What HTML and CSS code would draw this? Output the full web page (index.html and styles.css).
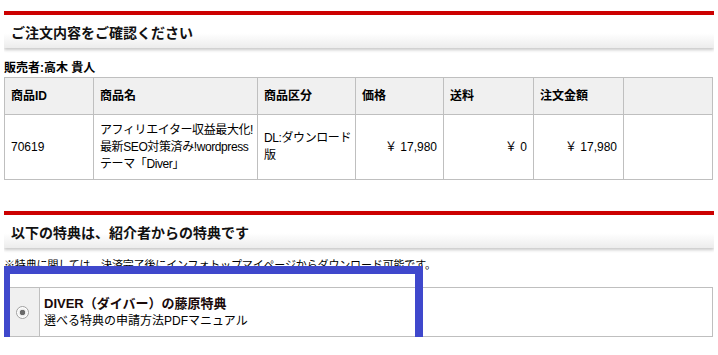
FILE: index.html
```html
<!DOCTYPE html>
<html lang="ja">
<head>
  <meta charset="UTF-8">
  <meta name="viewport" content="width=device-width, initial-scale=1.0">
  <title>ご注文内容をご確認ください</title>
  <link rel="stylesheet" href="styles.css">
</head>
<body>
  <h2 class="midashi">ご注文内容をご確認ください</h2>

  <p class="hanbaisha">販売者:高木 貴人</p>
  <table class="chumon">
    <colgroup>
      <col style="width: 89px">
      <col style="width: 164px">
      <col style="width: 98px">
      <col style="width: 88px">
      <col style="width: 90px">
      <col style="width: 90px">
      <col>
    </colgroup>
    <thead>
      <tr>
        <th>商品ID</th>
        <th>商品名</th>
        <th>商品区分</th>
        <th>価格</th>
        <th>送料</th>
        <th>注文金額</th>
        <th></th>
      </tr>
    </thead>
    <tbody>
      <tr>
        <td>70619</td>
        <td class="nowrap">アフィリエイター収益最大化!<br>最新SEO対策済み!wordpress<br>テーマ「Diver」</td>
        <td class="nowrap">DL:ダウンロード<br>版</td>
        <td class="kingaku">￥ 17,980</td>
        <td class="kingaku">￥ 0</td>
        <td class="kingaku">￥ 17,980</td>
        <td></td>
      </tr>
    </tbody>
  </table>

  <h2 class="midashi midashi-tokuten">以下の特典は、紹介者からの特典です</h2>

  <div class="tokuten">
    <p class="chuui">※特典に関しては、決済完了後にインフォトップマイページからダウンロード可能です。</p>
    <table class="tokuten-list">
      <tr>
        <td class="sentaku"><span class="radio"></span></td>
        <td>
          <div class="tokuten-mei">DIVER（ダイバー）の藤原特典</div>
          <div class="tokuten-setsumei">選べる特典の申請方法PDFマニュアル</div>
        </td>
      </tr>
    </table>
    <div class="waku"></div>
  </div>
</body>
</html>
```

FILE: styles.css
```css
/* 全体 */
body {
  margin: 11px 4px 0;
  font-family: "Liberation Sans", "Noto Sans CJK JP", sans-serif;
  font-size: 12px;
  color: #000;
  background-color: #fff;
}

/* 見出し */
.midashi {
  display: flex;
  align-items: center;
  height: 33px;
  margin: 0;
  padding: 0 7px;
  border-top: 4px solid #cc0000;
  background: linear-gradient(#fff 55%, #ececec);
  box-shadow: 0 2px 3px rgba(0, 0, 0, 0.22);
  font-size: 14px;
  font-weight: bold;
  color: #111;
}
.midashi-tokuten {
  margin-top: 31px;
}

.hanbaisha {
  margin: 14px 0 3px;
  line-height: 12px;
  font-weight: bold;
}

/* 注文テーブル */
.chumon {
  width: 709px;
  border-collapse: collapse;
  table-layout: fixed;
}
.chumon th,
.chumon td {
  border: 1px solid #bfbfbf;
  padding: 0 6px;
  text-align: left;
  line-height: 17px;
}
.chumon th {
  height: 36px;
  background-color: #f0f0f0;
  font-weight: bold;
}
.chumon td {
  height: 64px;
}
.chumon .nowrap {
  white-space: nowrap;
  letter-spacing: -0.4px;
  overflow: hidden;
}
.chumon .kingaku {
  text-align: right;
}

/* 特典 */
.tokuten {
  position: relative;
}
.chuui {
  margin: 10px 0 0;
  line-height: 14px;
  font-size: 11px;
  letter-spacing: -0.15px;
  white-space: nowrap;
}
.tokuten-list {
  width: 709px;
  margin-top: 15px;
  border-collapse: collapse;
}
.tokuten-list td {
  height: 48px;
  border: 1px solid #bfbfbf;
  padding: 0 4px;
  vertical-align: middle;
}
.tokuten-list .sentaku {
  width: 26px;
  background-color: #f0f0f0;
  text-align: center;
}
.radio {
  display: inline-block;
  width: 11px;
  height: 11px;
  border: 1px solid #a0a0a0;
  border-radius: 50%;
  background: radial-gradient(#6a6a6a 0 2.5px, #e8e8e8 3px, #fff 5px);
  vertical-align: middle;
}
.tokuten-mei {
  font-size: 13px;
  font-weight: bold;
  line-height: 19px;
  color: #1a0a0a;
}
.tokuten-setsumei {
  line-height: 17px;
}

/* 強調の枠 */
.waku {
  position: absolute;
  left: -2px;
  top: 8px;
  width: 421px;
  height: 83px;
  box-sizing: border-box;
  border: 8px solid #3f48cc;
}
```
